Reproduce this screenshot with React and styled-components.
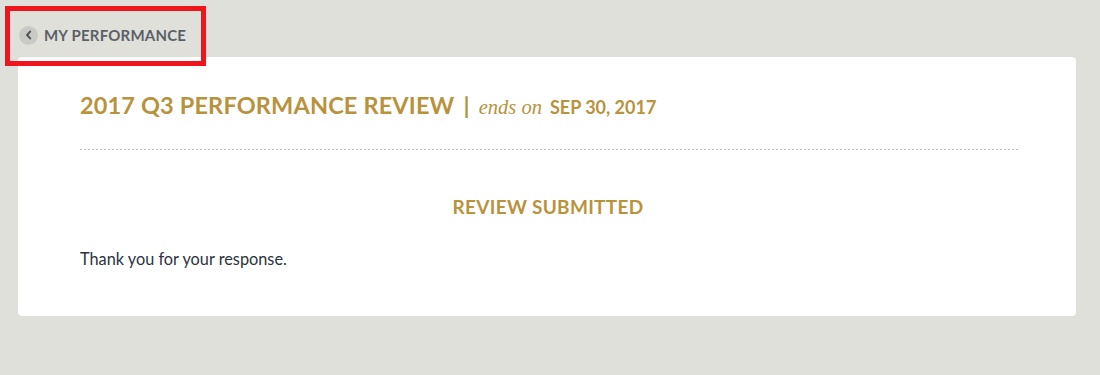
import React from "react";
import styled, { createGlobalStyle } from "styled-components";

const Global = createGlobalStyle`
  html, body { margin: 0; padding: 0; background: #e0e0db; }
  body { font-family: "Lato", "Liberation Sans", sans-serif; }
`;

const Page = styled.div`
  position: relative;
  width: 1100px;
  height: 375px;
  background: #e0e0db;
  padding: 24px 24px 0 18px;
  box-sizing: border-box;
`;

const BackLink = styled.a`
  display: inline-flex;
  align-items: center;
  gap: 6px;
  margin-left: 1px;
  height: 22px;
  color: #5b6068;
  font-weight: 700;
  font-size: 15px;
  letter-spacing: 0.2px;
  text-decoration: none;
  text-transform: uppercase;
`;

const Circle = styled.span`
  width: 19px;
  height: 19px;
  border-radius: 50%;
  background: #c9c9c6;
  display: flex;
  align-items: center;
  justify-content: center;
`;

const Card = styled.section`
  margin-top: 11px;
  background: #fff;
  border-radius: 4px;
  height: 259px;
  padding: 34px 60px 0 62px;
  box-sizing: border-box;
  box-shadow: 0 0 1px rgba(0, 0, 0, 0.06);
`;

const TitleRow = styled.h1`
  margin: 0;
  display: flex;
  align-items: baseline;
  color: #b8923c;
  font-weight: 700;
  font-size: 23.5px;
  letter-spacing: 0.15px;
  text-transform: uppercase;
`;

const Divider = styled.div`
  margin: 30px -2px 0 0;
  height: 1px;
  background-image: repeating-linear-gradient(
    to right,
    #bdbdbd 0 2px,
    transparent 2px 4px
  );
`;

const Bar = styled.span`
  margin: 0 9px 0 9px;
  font-weight: 700;
`;

const Ends = styled.span`
  font-family: "Liberation Serif", "DejaVu Serif", serif;
  font-style: italic;
  font-weight: 400;
  font-size: 20.5px;
  letter-spacing: 0;
  text-transform: none;
  margin-right: 8px;
`;

const DateText = styled.span`
  font-size: 18px;
  letter-spacing: 0;
`;

const Status = styled.h2`
  margin: 45px 0 0;
  text-align: center;
  color: #b8923c;
  font-weight: 700;
  font-size: 19px;
  letter-spacing: 0.3px;
  text-transform: uppercase;
`;

const Message = styled.p`
  margin: 31px 0 0;
  color: #2c3340;
  font-size: 16.3px;
  font-weight: 400;
`;

const Highlight = styled.div`
  position: absolute;
  left: 5px;
  top: 6px;
  width: 201px;
  height: 60px;
  border: 5px solid #f0141c;
  box-sizing: border-box;
  pointer-events: none;
`;

export default function App() {
  return (
    <>
      <Global />
      <Page>
        <BackLink href="#">
          <Circle>
            <svg width="10" height="10" viewBox="0 0 10 10">
              <path d="M6.2 1.6 L3 5 L6.2 8.4" fill="none" stroke="#4f545b" strokeWidth="2" strokeLinecap="round" strokeLinejoin="round" />
            </svg>
          </Circle>
          My Performance
        </BackLink>
        <Card>
          <TitleRow>
            2017 Q3 Performance Review
            <Bar>|</Bar>
            <Ends>ends on</Ends>
            <DateText>Sep 30, 2017</DateText>
          </TitleRow>
          <Divider />
          <Status>Review Submitted</Status>
          <Message>Thank you for your response.</Message>
        </Card>
        <Highlight />
      </Page>
    </>
  );
}
